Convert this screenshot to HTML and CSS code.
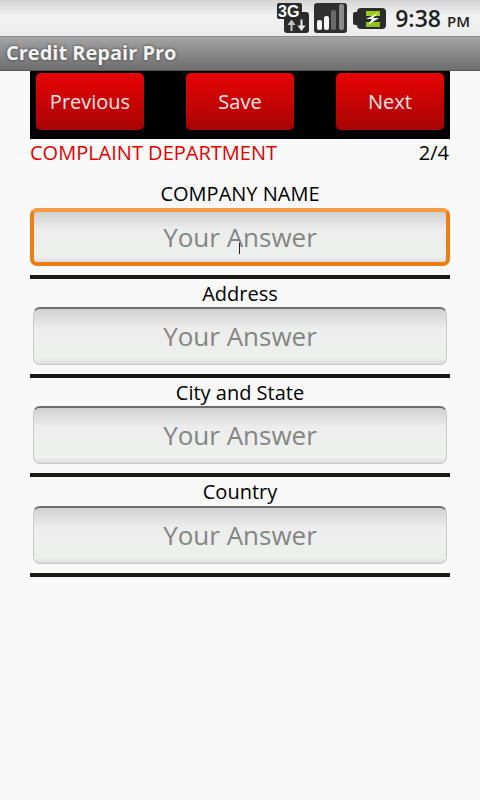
FILE: index.html

```html
<!DOCTYPE html>
<html lang="en">
<head>
    <meta charset="UTF-8">
    <meta name="viewport" content="width=device-width, initial-scale=1.0">
    <title>Credit Repair Pro</title>
    <link rel="stylesheet" href="styles.css">
</head>
<body>

<div class="status-bar">
    <svg class="icon-3g" width="32" height="30" viewBox="0 0 32 30">
        <rect x="0" y="0" width="25" height="16" rx="2" fill="#2b2b2b"/>
        <rect x="7" y="9" width="25" height="21" rx="3" fill="#2b2b2b"/>
        <text x="1" y="14" class="icon-3g-text">3G</text>
        <path d="M13.500 28v-6h-3l4-5.500 4 5.500h-3v6z" fill="#c4c4c4"/>
        <path d="M23.500 16.500v6h-3l4 5.500 4-5.500h-3v-6z" fill="#ececec"/>
    </svg>
    <svg class="icon-signal" width="33" height="30" viewBox="0 0 33 30">
        <rect width="33" height="30" rx="3" fill="#2f2f2f"/>
        <rect x="3" y="17" width="5" height="10" rx="2" fill="#f4f4f4"/>
        <rect x="10" y="13" width="5" height="14" rx="2" fill="#f4f4f4"/>
        <rect x="17" y="7" width="5" height="20" rx="2" fill="#6a6a6a"/>
        <rect x="25" y="1" width="5" height="26" rx="2" fill="#8a8a8a"/>
    </svg>
    <svg class="icon-battery" width="33" height="21" viewBox="0 0 33 21">
        <rect x="0" y="4" width="7" height="13" rx="2" fill="#2b2b2b"/>
        <rect x="4" y="0" width="29" height="21" rx="4" fill="#2b2b2b"/>
        <rect x="13" y="3" width="14" height="5" fill="#9ccb1f"/>
        <rect x="13" y="14" width="14" height="5" fill="#8fbf1a"/>
        <path d="M25 5l-12 6h6l-4 6 11-7h-6z" fill="#fff"/>
    </svg>
    <span class="clock">9:38 <small>PM</small></span>
</div>

<div class="title-bar">Credit Repair Pro</div>

<div class="content">
    <div class="toolbar">
        <button class="btn">Previous</button>
        <button class="btn">Save</button>
        <button class="btn">Next</button>
    </div>

    <div class="heading">
        <span class="department">COMPLAINT DEPARTMENT</span>
        <span>2/4</span>
    </div>

    <div class="field first">
        <label>COMPANY NAME</label>
        <div class="answer focused">Your Answer<span class="cursor"></span></div>
    </div>
    <div class="field">
        <label>Address</label>
        <div class="answer">Your Answer</div>
    </div>
    <div class="field">
        <label>City and State</label>
        <div class="answer">Your Answer</div>
    </div>
    <div class="field last">
        <label>Country</label>
        <div class="answer">Your Answer</div>
    </div>
</div>

</body>
</html>
```

FILE: styles.css

```css
* {
    box-sizing: border-box;
}
body {
    margin: 0;
    height: 800px;
    overflow: hidden;
    font-family: "Open Sans", "Noto Sans", sans-serif;
    background-color: #f9f9f9;
    color: #000;
}
.status-bar {
    display: flex;
    align-items: center;
    justify-content: flex-end;
    height: 36px;
    padding-right: 10px;
    background: linear-gradient(#d4d4d4, #f2f2f2 45%, #ebebeb);
}
.icon-3g {
    margin-right: 5px;
}
.icon-signal {
    margin-right: 6px;
}
.icon-battery {
    margin-right: 9px;
}
.icon-3g-text {
    font-family: "Liberation Sans", sans-serif;
    font-size: 16px;
    font-weight: bold;
    fill: #fff;
}
.clock {
    font-size: 23px;
    font-weight: 600;
    color: #222;
    white-space: nowrap;
    margin-top: -1px;
}
.clock small {
    font-size: 15px;
}
.title-bar {
    height: 35px;
    padding-left: 6px;
    line-height: 32px;
    font-size: 20px;
    font-weight: 700;
    color: #f4f4f4;
    text-shadow: 0 0 3px #333;
    background: linear-gradient(#a4a4a4, #6e6e6e);
    border-top: 1px solid #8a8a8a;
    border-bottom: 1px solid #555;
}
.content {
    width: 420px;
    margin: 0 auto;
}
.toolbar {
    display: flex;
    justify-content: space-between;
    height: 68px;
    padding: 2px 6px 0;
    background-color: #000;
}
.btn {
    width: 108px;
    height: 57px;
    padding: 0;
    border: none;
    border-radius: 5px;
    font-family: inherit;
    font-size: 20px;
    color: #f4e4e4;
    background: linear-gradient(#e60404, #a80404);
}
.heading {
    display: flex;
    justify-content: space-between;
    height: 41px;
    line-height: 28px;
    font-size: 20px;
}
.department {
    color: #e00000;
}
.heading span:last-child {
    margin-right: 1px;
}
.field {
    display: flex;
    flex-direction: column;
    align-items: center;
    height: 99px;
    padding-bottom: 9px;
    border-bottom: 4px solid #1c1a16;
}
.field.last {
    height: 100px;
    padding-top: 1px;
}
.field label {
    height: 28px;
    line-height: 29px;
    font-size: 20px;
}
.field.first label {
    line-height: 28px;
}
.field.last label {
    line-height: 27px;
}
.answer {
    position: relative;
    width: 414px;
    height: 58px;
    text-align: center;
    line-height: 55px;
    font-size: 26px;
    color: #848684;
    border: 1px solid #c8c8c8;
    border-top: 2px solid #6e6e6e;
    border-radius: 7px;
    background: linear-gradient(#d0d1d0, #ecedec 35%, #eef0ee 90%, #dcdcdc);
}
.answer.focused {
    width: 420px;
    height: 60px;
    border: 4px solid #ee7d14;
    border-top-color: #f59a45;
    line-height: 50px;
}
.field.last .answer {
    line-height: 54px;
}
.cursor {
    position: absolute;
    left: 205px;
    top: 31px;
    width: 1px;
    height: 11px;
    background-color: #222;
}
```
